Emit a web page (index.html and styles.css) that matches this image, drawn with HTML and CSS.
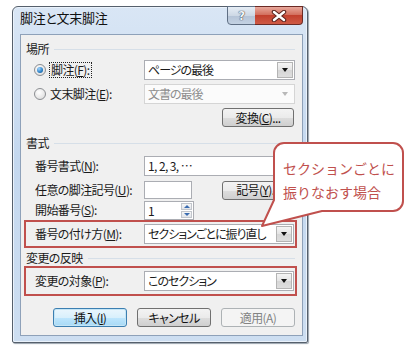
FILE: index.html
```html
<html lang="ja">
<head>
  <meta charset="UTF-8">
  <title>脚注と文末脚注</title>
  <link rel="stylesheet" href="styles.css">
</head>
<body>

  <div class="window">
    <div class="titlebar">脚注と文末脚注</div>
    <div class="cap-help">?</div>
    <div class="cap-close">
      <svg width="16" height="12" viewBox="0 0 16 12">
        <path d="M3 2 L13 10 M13 2 L3 10" stroke="#5b2520" stroke-width="4.5" stroke-linecap="round"/>
        <path d="M3 2 L13 10 M13 2 L3 10" stroke="#fff" stroke-width="2.4" stroke-linecap="round"/>
      </svg>
    </div>

    <div class="panel">
      <div class="group">場所</div>
      <div class="row first">
        <div class="radio-lbl"><span class="radio on"></span><span class="focus">脚注(<u>F</u>):</span></div>
        <div class="combo"><span class="val">ページの最後</span><span class="drop"></span></div>
      </div>
      <div class="row gap4">
        <div class="radio-lbl"><span class="radio"></span><span>文末脚注(<u>E</u>):</span></div>
        <div class="combo off"><span class="val">文書の最後</span><span class="drop"></span></div>
      </div>
      <div class="btn-right">
        <div class="btn wide">変換(<u>C</u>)...</div>
      </div>

      <div class="group g2">書式</div>
      <div class="row r-fmt">
        <div class="lbl">番号書式(<u>N</u>):</div>
        <div class="edit">1, 2, 3, …</div>
      </div>
      <div class="row r-mark">
        <div class="lbl">任意の脚注記号(<u>U</u>):</div>
        <div class="edit small"></div>
        <div class="btn wide sym">記号(<u>Y</u>)...</div>
      </div>
      <div class="row">
        <div class="lbl">開始番号(<u>S</u>):</div>
        <div class="spin">
          <span class="val">1</span>
          <span class="spin-btns"><i class="up"></i><i class="down"></i></span>
        </div>
      </div>
      <div class="hl hl1">
        <div class="lbl">番号の付け方(<u>M</u>):</div>
        <div class="combo"><span class="val">セクションごとに振り直し</span><span class="drop"></span></div>
      </div>

      <div class="group g3">変更の反映</div>
      <div class="hl hl2">
        <div class="lbl">変更の対象(<u>P</u>):</div>
        <div class="combo"><span class="val">このセクション</span><span class="drop"></span></div>
      </div>

      <div class="actions">
        <div class="btn default">挿入(<u>I</u>)</div>
        <div class="btn">キャンセル</div>
        <div class="btn disabled">適用(A)</div>
      </div>
    </div>
  </div>

  <!-- 吹き出し -->
  <svg class="callout" width="157" height="92" viewBox="0 0 157 92">
    <path d="M29 5 H138 A10 10 0 0 1 148 15 V63 A10 10 0 0 1 138 73 H67 L7 88 L19 62 V15 A10 10 0 0 1 29 5 Z"
          fill="#fff" stroke="#c0504d" stroke-width="2" stroke-linejoin="round"/>
  </svg>
  <div class="callout-text">セクションごとに<br>振りなおす場合</div>

</body>
</html>
```

FILE: styles.css
```css
body {
  margin: 0;
  padding: 0;
  background: #fff;
  font-family: "Noto Sans CJK JP", "Noto Sans", sans-serif;
  font-size: 12px;
  font-feature-settings: "palt";
  letter-spacing: -0.6px;
  color: #1a1a1a;
  position: relative;
  height: 348px;
  overflow: hidden;
}

u {
  text-decoration: underline;
  text-underline-offset: 1px;
}

.window {
  position: relative;
  margin: 6px 0 0 12px;
  width: 296px;
  height: 337px;
  box-sizing: border-box;
  border: 1px solid #56606c;
  border-radius: 6px 6px 2px 2px;
  background: linear-gradient(#d9e6f5, #c4d8ef 45%, #cddef1);
  padding: 0 4px 6px 7px;
  box-shadow: inset 0 0 0 1px #eaf2fb, 1px 1px 1px #9aa3ad;
}

.titlebar {
  height: 27px;
  line-height: 22px;
  font-size: 13px;
  letter-spacing: -0.3px;
  color: #111;
}

.cap-help, .cap-close {
  position: absolute;
  top: -1px;
  height: 19px;
  box-sizing: border-box;
  border: 1px solid #5f6f84;
  display: flex;
  align-items: center;
  justify-content: center;
}

.cap-help {
  left: 214px;
  width: 29px;
  border-radius: 0 0 0 4px;
  background: linear-gradient(#e6edf5, #cdd8e5 50%, #b4c3d6 51%, #c4d2e3);
  font-family: "DejaVu Sans", sans-serif;
  font-size: 12px;
  font-weight: bold;
  color: #f2f4f7;
  text-shadow: 0 0 1px #2c3440, 0 0 1px #2c3440;
}

.cap-close {
  left: 242px;
  width: 48px;
  border-left: none;
  border-color: #6b2a24;
  border-radius: 0 0 4px 0;
  background: linear-gradient(#e9a99c, #d3705f 45%, #c2402e 50%, #cf5a45);
}

.panel {
  height: 302px;
  box-sizing: border-box;
  border: 1px solid #8ea1b9;
  background: #f0f0f0;
  padding-top: 6px;
}

.group {
  display: flex;
  align-items: center;
  gap: 5px;
  height: 16px;
  padding-left: 5px;
  line-height: 16px;
}

.group::after {
  content: "";
  flex: 1;
  height: 1px;
  background: #d6dfe8;
  margin-right: 7px;
}

.g2 { margin-top: 8px; }
.g3 { margin-top: 2px; }

.row {
  display: grid;
  grid-template-columns: 123px 151px;
  align-items: center;
  height: 20px;
  line-height: 16px;
}

.first { margin-top: 3px; }
.gap4 { margin-top: 4px; }
.r-fmt { margin-top: 5px; }
.r-mark { margin-top: 4px; grid-template-columns: 123px 48px 72px; column-gap: 0; }

.lbl { padding-left: 14px; white-space: nowrap; }

.radio-lbl {
  display: flex;
  align-items: center;
  gap: 4px;
  padding-left: 13px;
}

.radio {
  width: 12px;
  height: 12px;
  box-sizing: border-box;
  border-radius: 50%;
  border: 1px solid #8b8e92;
  background: radial-gradient(circle at 40% 35%, #fff, #e3e3e3 70%, #d0d0d0);
  display: flex;
  align-items: center;
  justify-content: center;
}

.radio.on::after {
  content: "";
  width: 6px;
  height: 6px;
  border-radius: 50%;
  background: radial-gradient(circle at 35% 30%, #9fd4ff, #2a7fc4 60%, #174f86);
}

.focus {
  outline: 1px dotted #222;
  line-height: 14px;
  padding: 0 1px;
}

.combo {
  height: 20px;
  box-sizing: border-box;
  border: 1px solid #abadb3;
  background: #fff;
  display: flex;
  align-items: stretch;
}

.combo .val {
  flex: 1;
  padding-left: 3px;
  line-height: 18px;
  letter-spacing: -1px;
  white-space: nowrap;
  overflow: hidden;
}

.drop {
  width: 16px;
  margin: 1px;
  box-sizing: border-box;
  border: 1px solid #b4b4b4;
  background: linear-gradient(#f5f5f5, #e4e4e4 50%, #d6d6d6 51%, #dedede);
  display: flex;
  align-items: center;
  justify-content: center;
}

.drop::after {
  content: "";
  border-left: 3px solid transparent;
  border-right: 3px solid transparent;
  border-top: 4px solid #111;
}

.combo.off {
  border-color: #d5d5d5;
  background: #fbfbfb;
  color: #8d8d8d;
}

.combo.off .drop {
  border-color: transparent;
  background: none;
}

.combo.off .drop::after {
  border-top-color: #b8b8b8;
}

.edit {
  height: 20px;
  box-sizing: border-box;
  border: 1px solid #abadb3;
  background: #fff;
  padding-left: 3px;
  line-height: 18px;
}

.edit.small {
  height: 18px;
  line-height: 16px;
}

.btn {
  height: 19px;
  box-sizing: border-box;
  border: 1px solid #707070;
  border-radius: 3px;
  background: linear-gradient(#f3f3f3, #ebebeb 50%, #dddddd 51%, #cfcfcf);
  display: flex;
  align-items: center;
  justify-content: center;
  line-height: 16px;
  width: 74px;
  color: #111;
}

.btn.wide { width: 72px; }
.sym { margin-left: 30px; }

.btn-right {
  display: flex;
  justify-content: flex-end;
  padding-right: 8px;
  margin-top: 4px;
}

.spin {
  width: 50px;
  height: 19px;
  box-sizing: border-box;
  border: 1px solid #abadb3;
  background: #fff;
  display: flex;
}

.spin .val {
  flex: 1;
  padding-left: 3px;
  line-height: 17px;
}

.spin-btns {
  width: 11px;
  margin: 1px;
  display: flex;
  flex-direction: column;
  gap: 1px;
}

.spin-btns i {
  flex: 1;
  border: 1px solid #c2c6cc;
  background: linear-gradient(#f6f6f6, #e2e5ea);
  display: flex;
  align-items: center;
  justify-content: center;
}

.spin-btns .up::after {
  content: "";
  border-left: 3px solid transparent;
  border-right: 3px solid transparent;
  border-bottom: 3px solid #3b6cb0;
}

.spin-btns .down::after {
  content: "";
  border-left: 3px solid transparent;
  border-right: 3px solid transparent;
  border-top: 3px solid #3b6cb0;
}

.hl {
  margin-left: 3px;
  width: 273px;
  box-sizing: border-box;
  border: 2px solid #c0504d;
  display: grid;
  grid-template-columns: 118px 150px;
  align-items: center;
  line-height: 16px;
}

.hl .lbl { padding-left: 9px; }

.hl1 { height: 28px; }
.hl2 { height: 30px; }

.actions {
  display: flex;
  gap: 10px;
  padding-left: 32px;
  margin-top: 12px;
}

.btn.default {
  border-color: #3c7fb1;
  background: linear-gradient(#eaf6fd, #d9f0fc 50%, #bee6fd 51%, #a7d9f5);
  box-shadow: inset 0 0 0 1px #c4e5f6;
}

.btn.disabled {
  border-color: #adb2b5;
  background: #f4f4f4;
  color: #838383;
}

.callout {
  position: absolute;
  left: 255px;
  top: 138px;
}

.callout-text {
  position: absolute;
  left: 283px;
  top: 156px;
  font-size: 14px;
  line-height: 24px;
  letter-spacing: 0;
  color: #c0504d;
  white-space: nowrap;
  font-feature-settings: normal;
}
```
